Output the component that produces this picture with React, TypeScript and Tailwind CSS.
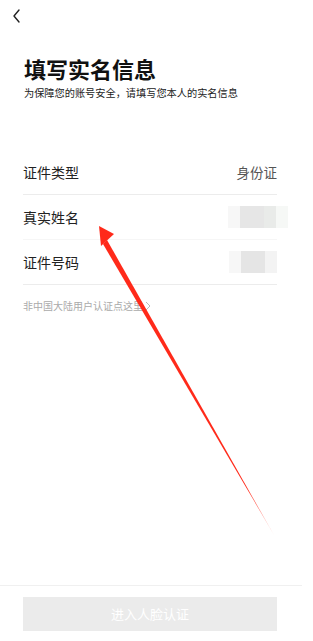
import React from 'react';

const FONT = { fontFamily: '"Noto Sans CJK SC", "Noto Sans", sans-serif' };

function Row({ label, children, faint }: { label: string; children?: React.ReactNode; faint?: boolean }) {
  return (
    <div className={'flex items-center justify-between h-[45px] border-b ' + (faint ? 'border-[#f6f6f6]' : 'border-[#ececec]')}>
      <span className="text-[14px] text-[#222]">{label}</span>
      {children}
    </div>
  );
}

export default function App() {
  return (
    <div className="relative w-[313px] h-[641px] bg-white overflow-hidden flex flex-col" style={FONT}>
      {/* back */}
      <div className="h-[34px] pl-[11px] pt-[8px]">
        <svg width="12" height="16" viewBox="0 0 12 16" fill="none">
          <path d="M8 2 L3 8 L8 14" stroke="#222" strokeWidth="1.4" strokeLinecap="round" strokeLinejoin="round" />
        </svg>
      </div>

      <div className="px-[24px] pt-[20px]">
        <h1 className="text-[22px] font-bold text-[#111] leading-[28px]">填写实名信息</h1>
        <p className="text-[10.2px] text-[#222] mt-[4px] leading-[14px]">为保障您的账号安全，请填写您本人的实名信息</p>
      </div>

      <div className="mx-[23px] w-[254px] mt-[50px]">
        <Row label="证件类型">
          <span className="text-[13.5px] text-[#555]">身份证</span>
        </Row>
        <Row label="真实姓名" faint>
          <div className="flex -mr-[11px]">
            <div className="w-[12px] h-[22px] bg-[#f7f7f7]" />
            <div className="w-[24px] h-[22px] bg-[#e6e6e6]" />
            <div className="w-[12px] h-[22px] bg-[#e9ebe9]" />
            <div className="w-[12px] h-[22px] bg-[#f6f8f6]" />
          </div>
        </Row>
        <Row label="证件号码">
          <div className="flex">
            <div className="w-[12px] h-[22px] bg-[#f7f7f7]" />
            <div className="w-[24px] h-[22px] bg-[#e5e5e5]" />
            <div className="w-[12px] h-[22px] bg-[#f3f3f3]" />
          </div>
        </Row>
        <div className="flex items-center mt-[13px] text-[10px] text-[#aaa]">
          <span>非中国大陆用户认证点这里</span>
          <svg width="8" height="10" viewBox="0 0 8 10" className="ml-[1px]">
            <path d="M2 1 L6 5 L2 9" stroke="#bbb" strokeWidth="1" fill="none" />
          </svg>
        </div>
      </div>

      <div className="flex-1" />

      <div className="border-t border-[#f0f0f0] w-[302px] pt-[11px] pb-[10px] px-[23px]">
        <div className="w-[254px] h-[34px] bg-[#ebebeb] flex items-center justify-center">
          <span className="text-[13px] text-white">进入人脸认证</span>
        </div>
      </div>

      {/* red annotation arrow */}
      <svg className="absolute inset-0 pointer-events-none" width="313" height="641" viewBox="0 0 313 641">
        <defs>
          <linearGradient id="fade" x1="100" y1="227" x2="274" y2="535" gradientUnits="userSpaceOnUse">
            <stop offset="0.85" stopColor="#ff2a1a" />
            <stop offset="1" stopColor="#ff2a1a" stopOpacity="0.2" />
          </linearGradient>
        </defs>
        <polygon points="107,240 274,535 103,244" fill="url(#fade)" />
        <polygon points="99,226 114,234 101,246" fill="#ff2a1a" />
      </svg>
    </div>
  );
}
